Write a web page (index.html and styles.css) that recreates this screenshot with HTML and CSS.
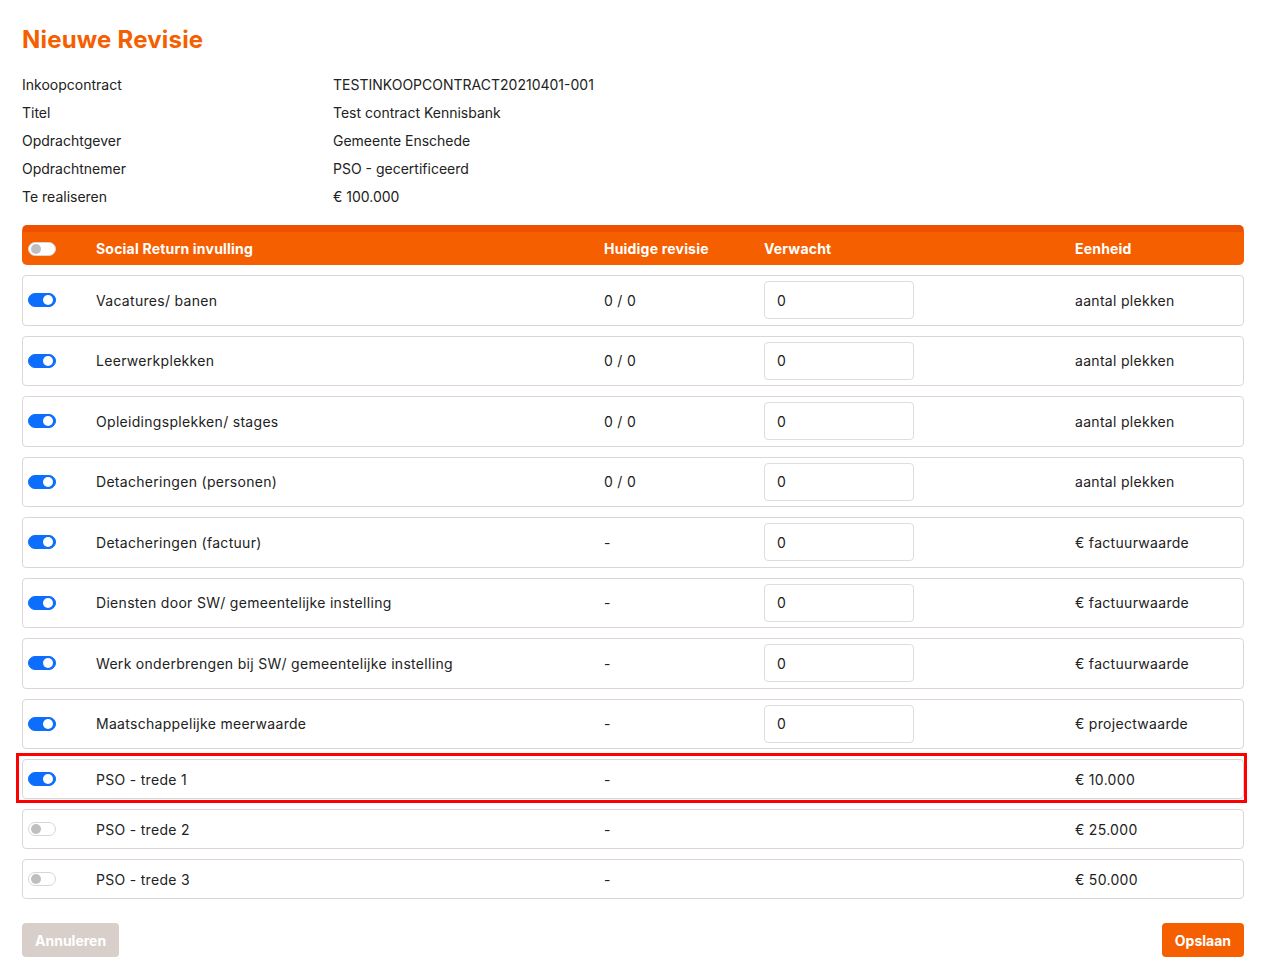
FILE: index.html
```html
<!DOCTYPE html>
<html lang="nl">
<head>
    <meta charset="UTF-8">
    <meta name="viewport" content="width=device-width, initial-scale=1.0">
    <title>Nieuwe Revisie</title>
    <link rel="stylesheet" href="styles.css">
</head>
<body>
    <div class="page">
        <h1 class="page-title">Nieuwe Revisie</h1>

        <!-- Contract gegevens -->
        <div class="info">
            <div class="info-label">Inkoopcontract</div>
            <div class="info-value">TESTINKOOPCONTRACT20210401-001</div>
            <div class="info-label">Titel</div>
            <div class="info-value">Test contract Kennisbank</div>
            <div class="info-label">Opdrachtgever</div>
            <div class="info-value">Gemeente Enschede</div>
            <div class="info-label">Opdrachtnemer</div>
            <div class="info-value">PSO - gecertificeerd</div>
            <div class="info-label">Te realiseren</div>
            <div class="info-value">€ 100.000</div>
        </div>

        <div class="table">
            <div class="table-head">
                <div><span class="switch"></span></div>
                <div>Social Return invulling</div>
                <div>Huidige revisie</div>
                <div>Verwacht</div>
                <div>Eenheid</div>
            </div>

            <div class="row">
                <div><span class="switch on"></span></div>
                <div>Vacatures/ banen</div>
                <div>0 / 0</div>
                <div><input class="input" type="text" value="0"></div>
                <div>aantal plekken</div>
            </div>
            <div class="row">
                <div><span class="switch on"></span></div>
                <div>Leerwerkplekken</div>
                <div>0 / 0</div>
                <div><input class="input" type="text" value="0"></div>
                <div>aantal plekken</div>
            </div>
            <div class="row">
                <div><span class="switch on"></span></div>
                <div>Opleidingsplekken/ stages</div>
                <div>0 / 0</div>
                <div><input class="input" type="text" value="0"></div>
                <div>aantal plekken</div>
            </div>
            <div class="row">
                <div><span class="switch on"></span></div>
                <div>Detacheringen (personen)</div>
                <div>0 / 0</div>
                <div><input class="input" type="text" value="0"></div>
                <div>aantal plekken</div>
            </div>
            <div class="row">
                <div><span class="switch on"></span></div>
                <div>Detacheringen (factuur)</div>
                <div>-</div>
                <div><input class="input" type="text" value="0"></div>
                <div>€ factuurwaarde</div>
            </div>
            <div class="row">
                <div><span class="switch on"></span></div>
                <div>Diensten door SW/ gemeentelijke instelling</div>
                <div>-</div>
                <div><input class="input" type="text" value="0"></div>
                <div>€ factuurwaarde</div>
            </div>
            <div class="row">
                <div><span class="switch on"></span></div>
                <div>Werk onderbrengen bij SW/ gemeentelijke instelling</div>
                <div>-</div>
                <div><input class="input" type="text" value="0"></div>
                <div>€ factuurwaarde</div>
            </div>
            <div class="row">
                <div><span class="switch on"></span></div>
                <div>Maatschappelijke meerwaarde</div>
                <div>-</div>
                <div><input class="input" type="text" value="0"></div>
                <div>€ projectwaarde</div>
            </div>

            <!-- PSO treden -->
            <div class="highlight">
                <div class="row small">
                    <div><span class="switch on"></span></div>
                    <div>PSO - trede 1</div>
                    <div>-</div>
                    <div></div>
                    <div>€ 10.000</div>
                </div>
            </div>
            <div class="row small">
                <div><span class="switch"></span></div>
                <div>PSO - trede 2</div>
                <div>-</div>
                <div></div>
                <div>€ 25.000</div>
            </div>
            <div class="row small">
                <div><span class="switch"></span></div>
                <div>PSO - trede 3</div>
                <div>-</div>
                <div></div>
                <div>€ 50.000</div>
            </div>
        </div>

        <div class="actions">
            <button class="btn btn-cancel">Annuleren</button>
            <button class="btn btn-save">Opslaan</button>
        </div>
    </div>
</body>
</html>
```

FILE: styles.css
```css
* {
    margin: 0;
    padding: 0;
    box-sizing: border-box;
    font-family: Inter, "Noto Sans", sans-serif;
}

body {
    background: #fff;
    color: #222;
    font-size: 14px;
}

.page {
    padding: 26px 23px 13px 22px;
}

.page-title {
    font-size: 24px;
    line-height: 28px;
    font-weight: 700;
    letter-spacing: 0.2px;
    color: #F55F00;
}

.info {
    display: grid;
    grid-template-columns: 311px 1fr;
    margin-top: 17px;
    line-height: 28px;
}

.table {
    margin-top: 14px;
    display: flex;
    flex-direction: column;
    gap: 10px;
}

.table-head,
.row {
    display: grid;
    grid-template-columns: 73px 508px 160px 311px 1fr;
    align-items: center;
}

.table-head {
    height: 40px;
    background: #F55F00; /* oranje balk */
    border-top: 7px solid #EC5000;
    border-left: 1px solid #F55F00;
    border-right: 1px solid #F55F00;
    border-radius: 5px;
    color: white;
    font-weight: 700;
    letter-spacing: 0.2px;
}

.row {
    height: 50.5px;
    border: 1px solid #DDD6D3;
    border-radius: 4px;
    letter-spacing: 0.3px;
}

.row.small {
    height: 40px;
}

.highlight {
    margin: -6px -3px -4px -6px;
    padding: 3px 0 1px 3px;
    border: 3px solid #F00;
}

.switch {
    display: block;
    position: relative;
    width: 28px;
    height: 14px;
    margin-left: 5px;
    border-radius: 7px;
    background: white;
    border: 1px solid #D6D6D6;
}

.switch::after {
    content: "";
    position: absolute;
    top: 1px;
    left: 2px;
    width: 10px;
    height: 10px;
    border-radius: 50%;
    background: #BFBFBF;
}

.switch.on {
    background: #0D6EFD;
    border-color: #0D6EFD;
}

.switch.on::after {
    left: auto;
    right: 2px;
    background: white;
}

.input {
    display: block;
    width: 150px;
    height: 38px;
    padding: 0 12px;
    border: 1px solid #DDDDDD;
    border-radius: 4px;
    font-size: 14px;
    color: #222;
    outline: none;
}

.actions {
    display: flex;
    justify-content: space-between;
    margin-top: 24px;
}

.btn {
    height: 34px;
    padding: 0 13px;
    border: none;
    border-radius: 4px;
    color: white;
    font-size: 14px;
    font-weight: 700;
    cursor: pointer;
}

.btn-cancel {
    background: #D8CECA;
}

.btn-save {
    background: #F55F00;
}
```
